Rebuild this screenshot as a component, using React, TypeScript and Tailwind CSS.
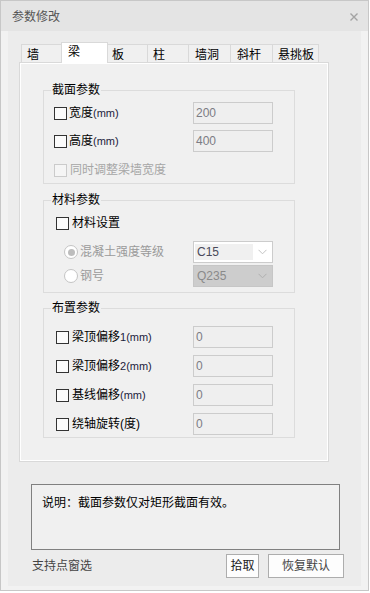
import React from "react";

function Check({ disabled }: { disabled?: boolean }) {
  return (
    <span
      className={
        disabled
          ? "inline-block w-[13px] h-[13px] border border-[#cbcbcb] bg-[#f5f5f5] shrink-0"
          : "inline-block w-[13px] h-[13px] border border-[#333333] bg-[#fbfbfb] shrink-0"
      }
    />
  );
}

function Radio({ checked }: { checked?: boolean }) {
  return (
    <span className="flex items-center justify-center w-[14px] h-[14px] rounded-full border border-[#c4c4c4] bg-white shrink-0">
      {checked ? <span className="block w-[7px] h-[7px] rounded-full bg-[#bdbdbd]" /> : null}
    </span>
  );
}

function Chevron({ color }: { color: string }) {
  return (
    <svg width="9" height="6" viewBox="0 0 9 6" className="shrink-0">
      <path d="M0.5 0.8 L4.5 4.8 L8.5 0.8" fill="none" stroke={color} strokeWidth="1" />
    </svg>
  );
}

function Group({ title, className, children }: { title: string; className?: string; children: React.ReactNode }) {
  return (
    <div className={"border border-[#dcdcdc] w-[252px] ml-[23px] " + (className ?? "")}>
      <div className="-mt-[9px] ml-[7px] w-fit px-[1px] bg-[#f0f0f0] leading-[16px] text-[12px] text-black">
        {title}
      </div>
      {children}
    </div>
  );
}

function Field({ value }: { value: string }) {
  return (
    <div className="w-[80px] h-[22px] border border-[#cccccc] bg-[#efefef] flex items-center pl-[2px] text-[12px] text-[#7c7c84] leading-[16px]">
      {value}
    </div>
  );
}

function Mm({ children }: { children: React.ReactNode }) {
  return <span className="text-[11px] text-[#1c1c3c]">{children}</span>;
}

export default function App() {
  return (
    <div className="w-[370px] h-[593px] bg-white font-['Liberation_Sans','Noto_Sans_CJK_SC',sans-serif]">
      <div className="w-[369px] h-[591px] border border-[#c7c7c7] bg-[#f2f2f2] flex flex-col">
        {/* title bar */}
        <div className="h-[30px] bg-[#e4e4e4] flex items-center justify-between pl-[11px] pr-[10px] shrink-0">
          <span className="text-[12px] leading-[16px] text-[#555555] mt-[2px]">参数修改</span>
          <svg width="8" height="8" viewBox="0 0 8 8" className="mt-[2px]">
            <path d="M0.5 0.5 L7.5 7.5 M7.5 0.5 L0.5 7.5" stroke="#a3a3a3" strokeWidth="1.4" />
          </svg>
        </div>

        {/* inner region */}
        <div className="flex-1 mx-[7px] mb-[4px] bg-[#ececec] flex flex-col pt-[11px]">
          {/* tabs */}
          <div className="flex items-end h-[20px] ml-[13px] text-[12px] leading-[16px] text-black">
            <div className="w-[40px] h-[18px] border-l border-t border-[#d9d9d9] bg-[#f0f0f0] pl-[5px] pt-[2px]">墙</div>
            <div className="relative z-10 w-[47px] h-[21px] -mb-[1px] border-l border-r border-t border-[#d9d9d9] bg-white pl-[6px] pt-[1px]">梁</div>
            <div className="w-[39px] h-[18px] border-t border-[#d9d9d9] bg-[#f0f0f0] pl-[4px] pt-[2px]">板</div>
            <div className="w-[41px] h-[18px] border-l border-t border-[#d9d9d9] bg-[#f0f0f0] pl-[5px] pt-[2px]">柱</div>
            <div className="w-[42px] h-[18px] border-l border-t border-[#d9d9d9] bg-[#f0f0f0] pl-[6px] pt-[2px]">墙洞</div>
            <div className="w-[42px] h-[18px] border-l border-t border-[#d9d9d9] bg-[#f0f0f0] pl-[6px] pt-[2px]">斜杆</div>
            <div className="w-[47px] h-[18px] border-l border-r border-t border-[#d9d9d9] bg-[#f0f0f0] pl-[5px] pt-[2px]">悬挑板</div>
          </div>

          {/* tab panel */}
          <div className="ml-[11px] w-[310px] border border-[#d9d9d9] bg-[#f0f0f0] shadow-[inset_1px_1px_0_#ffffff,inset_-1px_-1px_0_#ffffff] pt-[27px] pb-[23px] text-[12px] leading-[16px]">
            <Group title="截面参数" className="pb-[5px]">
              <div className="flex items-center mt-[4px] h-[22px]">
                <div className="w-[149px] pl-[10px] flex items-center">
                  <Check />
                  <span className="ml-[2px] text-black">宽度<Mm>(mm)</Mm></span>
                </div>
                <Field value="200" />
              </div>
              <div className="flex items-center mt-[6px] h-[22px]">
                <div className="w-[149px] pl-[10px] flex items-center">
                  <Check />
                  <span className="ml-[2px] text-black">高度<Mm>(mm)</Mm></span>
                </div>
                <Field value="400" />
              </div>
              <div className="flex items-center mt-[10px] h-[16px] pl-[10px]">
                <Check disabled />
                <span className="ml-[3px] text-[#a6a6a6]">同时调整梁墙宽度</span>
              </div>
            </Group>

            <Group title="材料参数" className="mt-[16px] pb-[5px]">
              <div className="flex items-center mt-[7px] h-[16px] pl-[12px]">
                <Check />
                <span className="ml-[3px] text-black">材料设置</span>
              </div>
              <div className="flex items-center mt-[10px] h-[22px]">
                <div className="w-[149px] pl-[20px] flex items-center">
                  <Radio checked />
                  <span className="ml-[2px] text-[#9a9a9a]">混凝土强度等级</span>
                </div>
                <div className="w-[80px] h-[22px] border border-[#cccccc] bg-white flex items-center pl-[1px] pr-[5px]">
                  <div className="w-[58px] h-[16px] bg-[#f0f0f0] flex items-center pl-[2px] text-[#4a4a5a]">C15</div>
                  <div className="flex-1" />
                  <Chevron color="#c2c2c2" />
                </div>
              </div>
              <div className="flex items-center mt-[2px] h-[22px]">
                <div className="w-[149px] pl-[20px] flex items-center">
                  <Radio />
                  <span className="ml-[2px] text-[#9a9a9a]">钢号</span>
                </div>
                <div className="w-[80px] h-[22px] border border-[#c6c6c6] bg-[#cdcdcd] flex items-center pl-[3px] pr-[5px] text-[#8a8a8a]">
                  <span>Q235</span>
                  <div className="flex-1" />
                  <Chevron color="#b0b0b0" />
                </div>
              </div>
            </Group>

            <Group title="布置参数" className="mt-[15px] pb-[2px]">
              <div className="flex flex-col gap-[7px] mt-[10px]">
                {[
                  { a: "梁顶偏移", b: "1(mm)" },
                  { a: "梁顶偏移", b: "2(mm)" },
                  { a: "基线偏移", b: "(mm)" },
                  { a: "绕轴旋转(度)", b: "" },
                ].map((r, i) => (
                  <div key={i} className="flex items-center h-[22px]">
                    <div className="w-[149px] pl-[12px] flex items-center">
                      <Check />
                      <span className="ml-[3px] text-black">
                        {r.a}
                        {r.b ? <Mm>{r.b}</Mm> : null}
                      </span>
                    </div>
                    <Field value="0" />
                  </div>
                ))}
              </div>
            </Group>
          </div>

          {/* note */}
          <div className="ml-[23px] mt-[22px] w-[309px] h-[66px] border border-[#808080] bg-[#f0f0f0] pl-[10px] pt-[10px] text-[12px] leading-[16px] text-black">
            说明：截面参数仅对矩形截面有效。
          </div>

          {/* bottom row */}
          <div className="mt-[4px] flex items-center pl-[24px] pr-[17px] text-[12px] leading-[16px]">
            <span className="text-[#444444]">支持点窗选</span>
            <div className="flex-1" />
            <div className="w-[33px] h-[24px] border border-[#adadad] bg-[#fdfdfd] flex items-center justify-center text-[#222222]">拾取</div>
            <div className="ml-[9px] w-[76px] h-[24px] border border-[#adadad] bg-[#fdfdfd] flex items-center justify-center text-[#444444]">恢复默认</div>
          </div>
        </div>
      </div>
    </div>
  );
}
